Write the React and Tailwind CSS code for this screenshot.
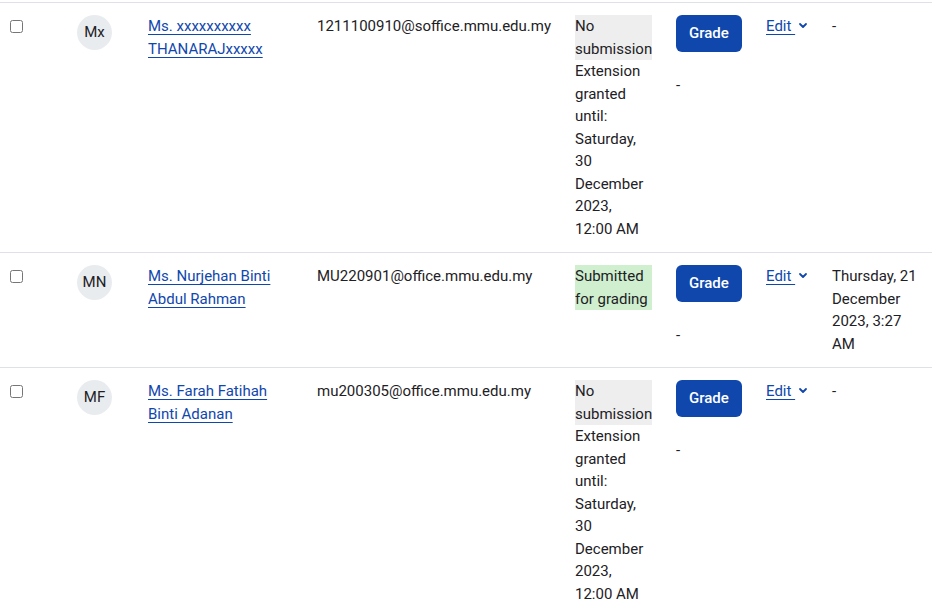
import React from "react";

const rows = [
  {
    initials: "Mx",
    name: ["Ms. xxxxxxxxxx", "THANARAJxxxxx"],
    email: "1211100910@soffice.mmu.edu.my",
    status: ["No", "submission"],
    statusBg: "bg-[#eeeeee]",
    extra: ["Extension", "granted", "until:", "Saturday,", "30", "December", "2023,", "12:00 AM"],
    date: ["-"],
  },
  {
    initials: "MN",
    name: ["Ms. Nurjehan Binti", "Abdul Rahman"],
    email: "MU220901@office.mmu.edu.my",
    status: ["Submitted", "for grading"],
    statusBg: "bg-[#cfefcf]",
    extra: [],
    date: ["Thursday, 21", "December", "2023, 3:27", "AM"],
  },
  {
    initials: "MF",
    name: ["Ms. Farah Fatihah", "Binti Adanan"],
    email: "mu200305@office.mmu.edu.my",
    status: ["No", "submission"],
    statusBg: "bg-[#eeeeee]",
    extra: ["Extension", "granted", "until:", "Saturday,", "30", "December", "2023,", "12:00 AM"],
    date: ["-"],
  },
];

function Lines({ items }) {
  return items.map((t, i) => (
    <React.Fragment key={i}>
      {i > 0 && <br />}
      {t}
    </React.Fragment>
  ));
}

export default function App() {
  const td = "border-t border-[#dee2e6] align-top py-3";
  return (
    <div
      className="w-[932px] bg-white pt-[2px] text-[15px] leading-[22.5px] text-[#1d2125]"
      style={{ fontFamily: "Roboto, 'Liberation Sans', sans-serif" }}
    >
      <table className="table-fixed w-[932px] border-collapse">
        <colgroup>
          <col className="w-[65px]" />
          <col className="w-[71px]" />
          <col className="w-[169px]" />
          <col className="w-[258px]" />
          <col className="w-[101px]" />
          <col className="w-[90px]" />
          <col className="w-[66px]" />
          <col className="w-[112px]" />
        </colgroup>
        <tbody>
          {rows.map((r, i) => (
            <tr key={i}>
              <td className={`${td} pl-[10px] pr-3`}>
                <input type="checkbox" className="w-[13px] h-[13px] align-[-2px] m-0" />
              </td>
              <td className={`${td} px-3`}>
                <div className="flex h-[35px] w-[35px] items-center justify-center rounded-full bg-[#e9ecef] text-[15px] text-[#1d2125]">
                  {r.initials}
                </div>
              </td>
              <td className={`${td} px-3`}>
                <a href="#" className="text-[#0f47ad] underline underline-offset-[3px] whitespace-nowrap">
                  <Lines items={r.name} />
                </a>
              </td>
              <td className={`${td} px-3 whitespace-nowrap`}>{r.email}</td>
              <td className={`${td} px-3 whitespace-nowrap`}>
                <div className={r.statusBg}>
                  <Lines items={r.status} />
                </div>
                {r.extra.length > 0 && (
                  <div>
                    <Lines items={r.extra} />
                  </div>
                )}
              </td>
              <td className={`${td} px-3`}>
                <button className="rounded-[6px] bg-[#0f47ad] px-[13px] py-[7px] text-[15px] font-medium leading-[22.5px] text-white">
                  Grade
                </button>
                <div className="mt-[22px]">-</div>
              </td>
              <td className={`${td} px-3 whitespace-nowrap`}>
                <a href="#" className="inline-flex items-center text-[#0f47ad]">
                  <span className="underline underline-offset-[3px]">Edit&nbsp;</span>
                  <svg width="10" height="8" viewBox="0 0 10 8" className="ml-[3px]">
                    <polyline points="2,2 5,5 8,2" fill="none" stroke="#0f47ad" strokeWidth="1.8" strokeLinecap="round" strokeLinejoin="round" />
                  </svg>
                </a>
              </td>
              <td className={`${td} px-3 whitespace-nowrap`}>
                <Lines items={r.date} />
              </td>
            </tr>
          ))}
        </tbody>
      </table>
    </div>
  );
}
